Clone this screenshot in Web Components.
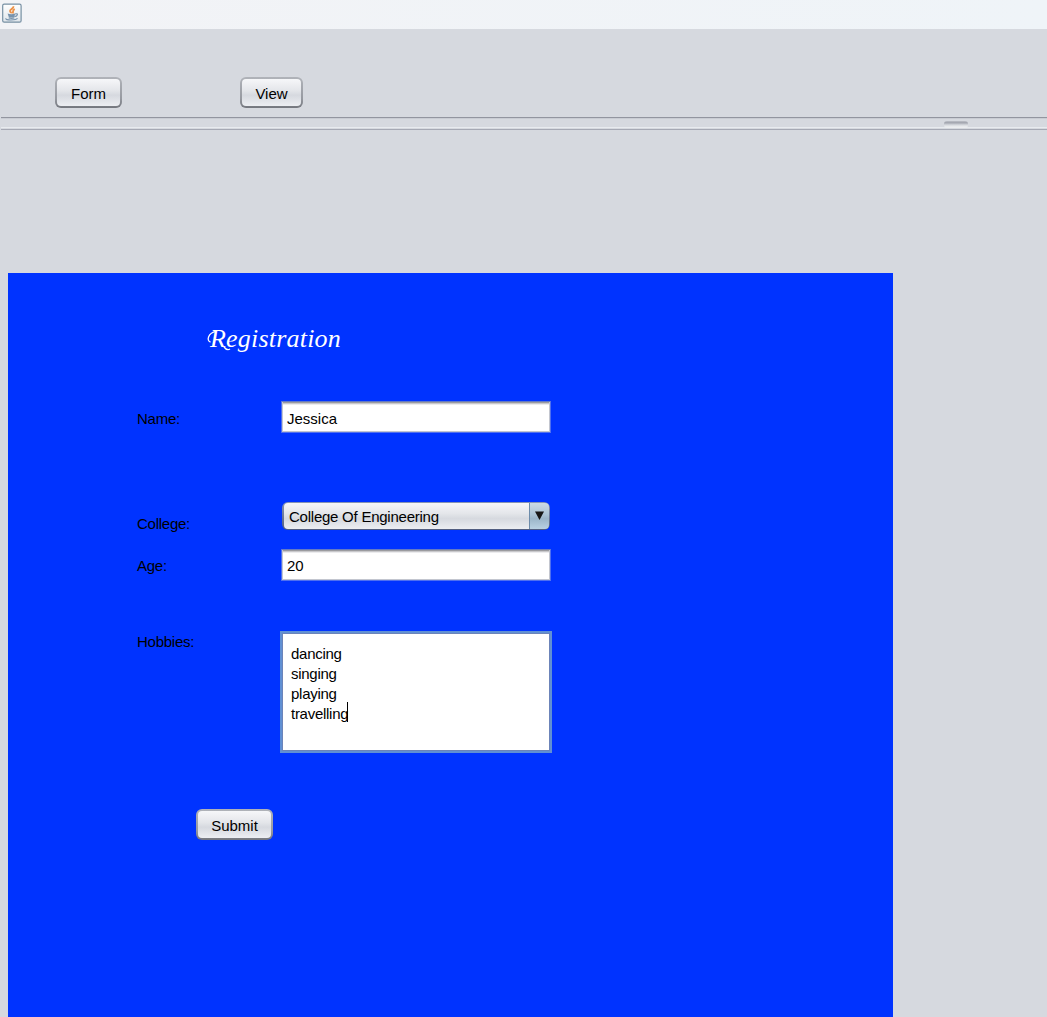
<!DOCTYPE html>
<html lang="en">
<head>
<meta charset="utf-8">
<title>Registration</title>
<style>
html,body{margin:0;height:100%;overflow:hidden;background:#d6d9df}
body{font:15px/20px "Liberation Sans",Arial,sans-serif;color:#000}
</style>
</head>
<body>
<app-window></app-window>
<script>
function define(name, html){
  const t=document.createElement('template');
  t.innerHTML=html;
  customElements.define(name,class extends HTMLElement{
    constructor(){
      super();
      this.attachShadow({mode:'open'}).append(t.content.cloneNode(true));
    }
  });
}
define('title-bar',`<style>
:host{display:flex;height:29px;background:linear-gradient(90deg,#f2f3f6,#eff4f8);box-sizing:border-box;padding:3px 0 0 2px}
svg{display:block}
</style>
<svg width="20" height="20" viewBox="0 0 20 20">
<defs><linearGradient id="g" x2="0" y2="1"><stop stop-color="#fff"/><stop offset="1" stop-color="#dfe5ea"/></linearGradient></defs>
<rect x=".7" y="1.2" width="18.4" height="18" rx="1.5" fill="url(#g)" stroke="#7790a3" stroke-width="1.2"/>
<path d="M11.4 3.2C12 5.7 7.2 6.3 8.1 8.4C8.4 9.2 9.3 9.6 9.2 10.4M12.8 6.2C9.8 7.4 11.9 8.4 10.5 10.4" fill="none" stroke="#ec9248" stroke-width="1.9"/>
<path d="M5.6 10.6Q9.5 11.8 13.2 10.4L12.3 14Q9.5 15 6.8 14Z" fill="#7893ad"/>
<path d="M13 11C16.6 9.8 16 13.2 12.4 13.7M4 15.3C2.8 17.6 14.3 17.5 15.5 15.3M6.7 14.9Q9.5 15.7 12.3 14.9" fill="none" stroke="#7893ad" stroke-width="1.2"/>
</svg>`);
define('push-button',`<style>
:host{display:block;box-sizing:border-box;height:31px;padding:2px;border-radius:6px;background:linear-gradient(#b0b3b9,#9699a0 70%,#73767d)}
div{display:flex;justify-content:center;align-items:center;height:27px;border-radius:4px;background:linear-gradient(#f6f7f9,#e4e6ea 42%,#d6d9df 60%,#eceef2);padding-top:2px;box-sizing:border-box}
</style><div><slot></slot></div>`);
define('tool-bar',`<style>
:host{display:flex;height:88px;box-sizing:border-box;padding:48px 0 0 55px}
.f{width:67px;margin-right:118px}.v{width:63px}
</style><push-button class="f">Form</push-button><push-button class="v">View</push-button>`);
define('split-divider',`<style>
:host{display:flex;height:13px;margin-left:1px;box-sizing:border-box;border-top:1px solid #92959f;border-bottom:1px solid #a6a9b4;padding:3px 0 0 943px;background:linear-gradient(#c9ccd3 0 1px,#d6d9df 1px 9px,#e8ebef 9px 10px,#d6d9df 10px)}
i{display:block;width:24px;height:7px;border-radius:3px;background:linear-gradient(#b5b8c0 0 1px,#a5a8b1 1px 2px,#c3c6cd 3px,#e5e7ea 5px,#eef0f2)}
</style><i></i>`);
define('text-field',`<style>
:host{display:block;box-sizing:border-box;width:270px;height:32px;border:1px solid #4f70f0;border-top-color:#647ac4;background:linear-gradient(#9b9b9f 0 1px,#c8c8cb 1px 2px,#ececee 2px 3px,#fff 3px);box-shadow:inset 1px 0 #c3c6cf,inset -1px 0 #c3c6cf,inset 0 -1px #c3c6cf;padding:var(--text-top,7px) 0 0 5px}
</style><slot></slot>`);
define('combo-box',`<style>
:host{display:flex;box-sizing:border-box;width:268px;height:28px;padding:1px 1.5px 1.5px;border-radius:6px;background:linear-gradient(#8795b5,#505c80);letter-spacing:-.24px}
.t{flex:1;border-radius:4px 0 0 4px;background:linear-gradient(#f6f7f9,#e4e6ea 40%,#d6d9df 60%,#eceef2);padding:4px 0 0 5.5px;box-sizing:border-box}
.a{width:19.5px;border-left:1px solid #6c8baa;box-sizing:border-box;border-radius:0 4px 4px 0;background:linear-gradient(#cbdae5,#abc3d5 45%,#9bb5c9 60%,#b9d1e3)}
svg{display:block}
</style><div class="t"><slot></slot></div><div class="a"><svg width="18" height="25"><path d="M5 8.5h9L9.5 17z" fill="#171717"/></svg></div>`);
define('text-area',`<style>
:host{display:block;box-sizing:border-box;width:272px;height:122px;border:2px solid #6190d3;background:#fff;box-shadow:inset 0 0 0 1px #6c84b9;padding:11px 0 0 9px;white-space:pre-line;letter-spacing:-.27px}
i{display:inline-block;width:1px;height:20px;background:#000;vertical-align:top;margin:-2px 0 0 -1px}
</style><slot></slot><i></i>`);
define('form-row',`<style>
:host{display:flex;align-items:flex-start}
.l{width:144px;flex:none;padding-top:var(--drop,7px);letter-spacing:-.25px}
</style><div class="l"><slot name="label"></slot></div><slot></slot>`);
define('registration-form',`<style>
:host{display:flex;flex-direction:column;flex:none;box-sizing:border-box;width:885px;height:744px;margin:143px 0 0 8px;background:#0033ff;padding:46px 0 0 129px}
h1{position:relative;margin:0 0 0 73px;font:italic 26px/40px "Monotype Corsiva","Liberation Serif",serif;letter-spacing:.2px;color:#fff;height:40px;white-space:nowrap}
h1 svg{position:absolute;left:-3px;top:8px;overflow:visible}
.name{margin-top:42px;--drop:8px}.college{margin-top:69px;--drop:12px}.age{margin-top:15px;--text-top:6px}.hob{margin-top:50px;--drop:1px}
combo-box{margin-left:1px}text-area{margin-left:-1px}
push-button{width:77px;margin:56px 0 0 59px}
</style>
<h1>Registration<svg width="20" height="28" fill="none" stroke="#fff"><path d="M3.5 15C-.8 14 .8 6 9 4.3M17 20Q20 24 23 22" stroke-width="1.3"/></svg></h1>
<form-row class="name"><span slot="label">Name:</span><text-field>Jessica</text-field></form-row>
<form-row class="college"><span slot="label">College:</span><combo-box>College Of Engineering</combo-box></form-row>
<form-row class="age"><span slot="label">Age:</span><text-field>20</text-field></form-row>
<form-row class="hob"><span slot="label">Hobbies:</span><text-area>dancing
singing
playing
travelling</text-area></form-row>
<push-button>Submit</push-button>`);
define('app-window',`<style>
:host{display:flex;flex-direction:column;height:1017px;overflow:hidden}
title-bar,tool-bar,split-divider{flex:none}
</style><title-bar></title-bar><tool-bar></tool-bar><split-divider></split-divider><registration-form></registration-form>`);
</script>
</body>
</html>
